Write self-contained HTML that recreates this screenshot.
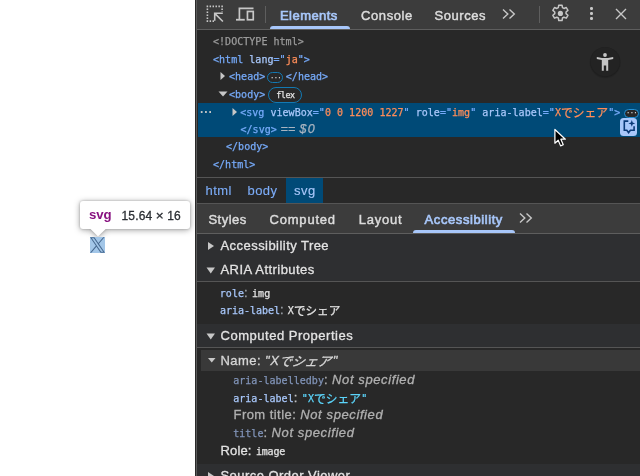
<!DOCTYPE html>
<html lang="ja">
<head>
<meta charset="utf-8">
<title>DevTools</title>
<style>
html,body{margin:0;padding:0;}
body{width:640px;height:476px;position:relative;overflow:hidden;background:#fff;
  font-family:"Liberation Sans","Noto Sans CJK JP",sans-serif;font-size:13px;color:#e3e3e3;}
.abs{position:absolute;}
.mono{font-family:"DejaVu Sans Mono","Liberation Mono","Noto Sans CJK JP",monospace;font-size:10px;letter-spacing:0.03px;-webkit-text-stroke:0.25px;}
.cjk{font-family:"Noto Sans CJK JP",sans-serif;font-size:11.8px;letter-spacing:0;line-height:0;position:relative;top:1.1px;}
#dt{left:196px;top:0;width:444px;height:476px;background:#282828;}
#lb{left:196px;top:0;width:1px;height:476px;background:#5a5a5a;}
.t{position:absolute;white-space:nowrap;line-height:1;}
.ui{font-size:13px;letter-spacing:0.45px;-webkit-text-stroke:0.3px;}
.tab{-webkit-text-stroke:0.45px;}
.crumb{-webkit-text-stroke:0.12px;}
.sel{color:#a8c7fa;-webkit-text-stroke:0.65px;letter-spacing:0.45px;}
.tag{color:#76aaf9;}
.an{color:#a8c7fa;}
.av{color:#fe8d59;}
.gr{color:#9aa0a6;}
.row{position:absolute;left:0;height:17.5px;line-height:17.5px;white-space:nowrap;}
</style>
</head>
<body>
<div id="wrap" style="position:absolute;left:0;top:0;width:640px;height:476px;will-change:transform;">
<div class="abs" id="dt"></div>
<div class="abs" id="lb"></div>
<div class="abs" style="left:195px;top:0;width:1px;height:476px;background:#2a2a2a;"></div>

<!-- top toolbar -->
<div class="abs" style="left:197px;top:0;width:443px;height:29px;background:#3c3c3c;"></div>
<div class="abs" style="left:197px;top:29px;width:443px;height:1px;background:#5e5e5e;"></div>
<!-- inspect icon -->
<svg class="abs" style="left:206px;top:5px" width="18" height="18" viewBox="0 0 18 18">
  <rect x="1.400" y="1.400" width="14.700" height="14.700" fill="none" stroke="#c7c7c7" stroke-width="1.600" stroke-dasharray="1.470 1.470" stroke-dashoffset="0.735"/>
  <rect x="8.400" y="8.500" width="10" height="10" fill="#3c3c3c"/>
  <rect x="9.900" y="6.900" width="8.100" height="3" fill="#3c3c3c"/>
  <path d="M8.700 15.800 V8.300 H16.800 M9 8.600 L16.900 16.500" fill="none" stroke="#c7c7c7" stroke-width="1.600"/>
</svg>
<!-- device icon -->
<svg class="abs" style="left:235px;top:6px" width="20" height="16" viewBox="0 0 20 16">
  <path d="M4.400 13 V2.300 H18.500" fill="none" stroke="#c7c7c7" stroke-width="1.700"/>
  <path d="M1 13.750 H9.750" fill="none" stroke="#c7c7c7" stroke-width="1.800"/>
  <rect x="12.450" y="5.450" width="5.800" height="8.300" fill="none" stroke="#c7c7c7" stroke-width="1.700"/>
</svg>
<div class="abs" style="left:265px;top:6px;width:1px;height:17px;background:#5e5e5e;"></div>
<div class="t ui sel" style="left:280px;top:8.5px;">Elements</div>
<div class="abs" style="left:270px;top:26px;width:80px;height:3px;background:#a8c7fa;border-radius:3px 3px 0 0;"></div>
<div class="t ui tab" style="left:361px;top:8.5px;color:#dcdcdc;letter-spacing:0.6px">Console</div>
<div class="t ui tab" style="left:434.5px;top:8.5px;color:#dcdcdc;letter-spacing:0.55px">Sources</div>
<svg class="abs" style="left:501px;top:8px" width="16" height="12" viewBox="0 0 16 12">
  <path d="M2 1.5 L6.8 6 L2 10.5 M8.5 1.5 L13.3 6 L8.5 10.5" fill="none" stroke="#c7c7c7" stroke-width="1.4"/>
</svg>
<div class="abs" style="left:539px;top:6px;width:1px;height:17px;background:#5e5e5e;"></div>
<!-- gear -->
<svg class="abs" style="left:549.5px;top:3.4px" width="20.8" height="20.8" viewBox="0 0 24 24">
  <path fill="none" stroke="#c7c7c7" stroke-width="1.700" stroke-linejoin="round" d="M10.1 2.5h3.8l.5 2.9 1.7.9 2.7-1.1 1.9 3.3-2.2 1.9v1.9l2.2 1.9-1.9 3.3-2.7-1.1-1.7.9-.5 2.9h-3.8l-.5-2.9-1.7-.9-2.7 1.1-1.9-3.3 2.2-1.9v-1.9l-2.2-1.900 1.9-3.3 2.7 1.100 1.700-.9z"/>
  <circle cx="12" cy="12" r="3" fill="#c7c7c7"/>
</svg>
<div class="abs" style="left:589.5px;top:7.3px;width:3px;height:3px;border-radius:1.2px;background:#c7c7c7"></div>
<div class="abs" style="left:589.5px;top:12.3px;width:3px;height:3px;border-radius:1.2px;background:#c7c7c7"></div>
<div class="abs" style="left:589.5px;top:17.3px;width:3px;height:3px;border-radius:1.2px;background:#c7c7c7"></div>
<svg class="abs" style="left:614px;top:7px" width="14" height="14" viewBox="0 0 14 14">
  <path d="M2 2 L12 12 M12 2 L2 12" fill="none" stroke="#c7c7c7" stroke-width="1.4"/>
</svg>

<!-- DOM tree -->
<div class="abs" style="left:198px;top:102.7px;width:442px;height:34.3px;background:#004a77;"></div>
<div class="row mono" style="left:213px;top:33.3px;color:#9b9b9b;">&lt;!DOCTYPE html&gt;</div>
<div class="row mono" style="left:213px;top:50.8px;"><span class="tag">&lt;html </span><span class="an">lang</span><span class="tag">="</span><span class="av">ja</span><span class="tag">"&gt;</span></div>
<div class="row mono" style="left:229px;top:68.3px;"><span class="tag">&lt;head&gt;</span><span style="display:inline-block;width:20.5px"></span><span class="tag">&lt;/head&gt;</span></div>
<div class="row mono" style="left:229px;top:85.8px;"><span class="tag">&lt;body&gt;</span></div>
<div class="row mono" style="left:240.200px;top:103.600px;"><span class="tag">&lt;svg </span><span class="an">viewBox</span><span class="tag">="</span><span class="av">0 0 1200 1227</span><span class="tag">" </span><span class="an">role</span><span class="tag">="</span><span class="av">img</span><span class="tag">" </span><span class="an">aria-label</span><span class="tag">="</span><span class="av">X<span class="cjk">でシェア</span></span><span class="tag">"&gt;</span></div>
<div class="row mono" style="left:240.5px;top:120.8px;"><span class="tag">&lt;/svg&gt;</span><span style="font-family:'Liberation Sans',sans-serif;color:#a9b4c0;font-style:italic;font-size:12.5px;letter-spacing:0.3px;position:absolute;left:40px;top:0">== <span style="letter-spacing:1.2px">$0</span></span></div>
<div class="row mono" style="left:226px;top:138.3px;"><span class="tag">&lt;/body&gt;</span></div>
<div class="row mono" style="left:213px;top:155.800px;"><span class="tag">&lt;/html&gt;</span></div>
<!-- tree arrows -->
<svg class="abs" style="left:218.5px;top:71px" width="8" height="10" viewBox="0 0 8 10"><path d="M1.5 1 L6 5 L1.5 9 Z" fill="#c7c7c7"/></svg>
<svg class="abs" style="left:217.500px;top:89.700px" width="10" height="8" viewBox="0 0 10 8"><path d="M0.5 1.5 H9.5 L5 6.5 Z" fill="#c7c7c7"/></svg>
<svg class="abs" style="left:231.400px;top:107px" width="8" height="10" viewBox="0 0 8 10"><path d="M1.5 1 L6 5 L1.5 9 Z" fill="#c7c7c7"/></svg>
<!-- head ellipsis pill -->
<div class="abs" style="left:267.2px;top:72px;width:14px;height:9px;border:1px solid #1279b3;border-radius:6px;"></div>
<div class="t" style="left:270.5px;top:72.5px;font-size:10px;color:#e3e3e3;letter-spacing:0.3px;">···</div>
<!-- flex pill -->
<div class="abs" style="left:268px;top:87px;width:32.3px;height:13.6px;border:1px solid #1279b3;border-radius:8px;"></div>
<div class="t mono" style="left:276.2px;top:90.5px;font-size:8.400px;color:#e3e3e3;letter-spacing:-0.4px">flex</div>
<!-- left ellipsis -->
<div class="t" style="left:200px;top:106px;font-size:12px;font-weight:bold;color:#c7c7c7;letter-spacing:0.3px;">···</div>
<!-- row end ellipsis pill -->
<div class="abs" style="left:623.600px;top:108.700px;width:13.100px;height:7.200px;border:1px solid #2390d6;border-radius:6px;background:#282828;"></div>
<div class="t" style="left:626.6px;top:108.3px;font-size:10px;color:#e3e3e3;letter-spacing:0.3px;">···</div>
<!-- AI button -->
<div class="abs" style="left:620px;top:118px;width:17px;height:17.5px;background:#a8c7fa;border-radius:3.5px;"></div>
<svg class="abs" style="left:620px;top:118px" width="17" height="18" viewBox="0 0 17 18">
  <path d="M8.300 3.100 H4.300 V12.300 H6.800 L8.600 14.600 L10.400 12.300 H14.100 V8.300" fill="none" stroke="#0a3a78" stroke-width="1.600"/>
  <path d="M11.800 2 L12.700 4.500 L15.200 5.400 L12.700 6.300 L11.800 8.800 L10.900 6.300 L8.400 5.400 L10.900 4.500 Z" fill="#0a3a78"/>
</svg>
<!-- floating a11y button -->
<svg class="abs" style="left:588px;top:44px" width="34" height="36" viewBox="0 0 34 36">
  <circle cx="17.2" cy="18.6" r="15.6" fill="#000" opacity="0.10"/>
  <circle cx="17.2" cy="18.200" r="15" fill="#000" opacity="0.12"/>
  <circle cx="17.2" cy="17.800" r="14.600" fill="#232323"/>
  <circle cx="17" cy="11" r="1.900" fill="#c6c6c6"/>
  <path d="M8.800 13.100 L14 14 H20 L25.200 13.100 V14.900 L20.200 16.100 V26.700 H18.200 V21.600 H15.800 V26.700 H13.800 V16.100 L8.800 14.900 Z" fill="#c6c6c6"/>
</svg>

<!-- breadcrumbs -->
<div class="abs" style="left:197px;top:177px;width:443px;height:1px;background:#555;"></div>
<div class="abs" style="left:286px;top:178px;width:37px;height:25px;background:#004a77;"></div>
<div class="t ui crumb" style="left:205.500px;top:184px;color:#7cacf8;">html</div>
<div class="t ui crumb" style="left:247.500px;top:184px;color:#7cacf8;">body</div>
<div class="t ui crumb" style="left:294px;top:184px;color:#a8c7fa;">svg</div>

<!-- side tabs -->
<div class="abs" style="left:197px;top:203px;width:443px;height:30px;background:#3c3c3c;"></div>
<div class="abs" style="left:197px;top:203px;width:443px;height:1px;background:#555;"></div>
<div class="abs" style="left:197px;top:233px;width:443px;height:1px;background:#5e5e5e;"></div>
<div class="t ui tab" style="left:208.500px;top:213px;color:#dcdcdc;">Styles</div>
<div class="t ui tab" style="left:269.500px;top:213px;color:#dcdcdc;letter-spacing:0.8px">Computed</div>
<div class="t ui tab" style="left:358.8px;top:213px;color:#dcdcdc;letter-spacing:0.75px">Layout</div>
<div class="t ui sel" style="left:424.600px;top:213px;letter-spacing:0.58px">Accessibility</div>
<div class="abs" style="left:413px;top:230px;width:102px;height:3px;background:#a8c7fa;border-radius:3px 3px 0 0;"></div>
<svg class="abs" style="left:518px;top:212px" width="16" height="12" viewBox="0 0 16 12">
  <path d="M2 1.500 L6.800 6 L2 10.500 M8.500 1.500 L13.300 6 L8.500 10.500" fill="none" stroke="#c7c7c7" stroke-width="1.400"/>
</svg>

<!-- section headers -->
<div class="abs" style="left:197px;top:234px;width:443px;height:47px;background:#2e2f31;"></div>
<div class="abs" style="left:197px;top:281px;width:443px;height:1px;background:#555;"></div>
<svg class="abs" style="left:207px;top:241px" width="8" height="10" viewBox="0 0 8 10"><path d="M1 1 L7 5 L1 9 Z" fill="#c7c7c7"/></svg>
<div class="t ui" style="left:220.500px;top:239px;color:#e3e3e3;">Accessibility Tree</div>
<svg class="abs" style="left:206px;top:265.700px" width="10" height="8" viewBox="0 0 10 8"><path d="M0.500 1.500 H9 L4.750 7.500 Z" fill="#c7c7c7"/></svg>
<div class="t ui" style="left:220.500px;top:263px;color:#e3e3e3;">ARIA Attributes</div>

<div class="row" style="left:219.800px;top:283.900px;"><span class="mono an">role</span><span class="ui gr" style="margin-right:-0.1px">: </span><span class="mono" style="color:#e3e3e3">img</span></div>
<div class="row" style="left:220.100px;top:301.200px;"><span class="mono an" style="letter-spacing:-0.03px">aria-label</span><span class="ui gr" style="margin-right:-0.300px">: </span><span class="mono" style="color:#e3e3e3">X<span class="cjk" style="font-size:11.600px">でシェア</span></span></div>

<div class="abs" style="left:197px;top:324px;width:443px;height:23px;background:#2e2f31;"></div>
<div class="abs" style="left:197px;top:347px;width:443px;height:1px;background:#555;"></div>
<svg class="abs" style="left:206px;top:331.500px" width="10" height="8" viewBox="0 0 10 8"><path d="M0.500 1.500 H9 L4.750 7.500 Z" fill="#c7c7c7"/></svg>
<div class="t ui" style="left:220.500px;top:329px;color:#e3e3e3;letter-spacing:0.52px">Computed Properties</div>

<div class="abs" style="left:201px;top:350px;width:439px;height:20.700px;background:#393939;"></div>
<svg class="abs" style="left:207px;top:357px" width="10" height="7" viewBox="0 0 10 7"><path d="M1 1 H8.500 L4.750 5.500 Z" fill="#c7c7c7"/></svg>
<div class="t ui" style="left:220.500px;top:353.700px;color:#d6d6d6;">Name: <span style="font-style:italic">"X<span style="font-family:'Noto Sans CJK JP',sans-serif;font-size:13px;letter-spacing:0;line-height:0;display:inline-block;position:relative;top:1px;margin-right:1.5px;transform:skewX(-12deg)">でシェア</span>"</span></div>

<div class="t" style="left:233.200px;top:373.300px;"><span class="mono" style="color:#8194b8">aria-labelledby</span><span class="ui" style="color:#b0b0b0">: <i style="letter-spacing:0.6px">Not specified</i></span></div>
<div class="t" style="left:233.200px;top:390.800px;"><span class="mono"><span class="an">aria-label</span></span><span class="ui" style="color:#c0c0c0">: </span><span class="mono"><span style="color:#5cd5fb">"X<span class="cjk">でシェア</span>"</span></span></div>
<div class="t ui" style="left:233.500px;top:407.600px;color:#b0b0b0;">From title: <i style="letter-spacing:0.6px">Not specified</i></div>
<div class="t" style="left:233.200px;top:425.800px;"><span class="mono" style="color:#8194b8">title</span><span class="ui" style="color:#b0b0b0">: <i style="letter-spacing:0.6px">Not specified</i></span></div>
<div class="t" style="left:220.500px;top:443.500px;"><span class="ui" style="color:#e3e3e3;letter-spacing:0.15px">Role: </span><span class="mono" style="color:#e3e3e3;letter-spacing:-0.15px;margin-left:0.5px">image</span></div>

<div class="abs" style="left:197px;top:463.500px;width:443px;height:13px;background:#2e2f31;"></div>
<svg class="abs" style="left:207px;top:471px" width="8" height="10" viewBox="0 0 8 10"><path d="M1 1 L7 5 L1 9 Z" fill="#c7c7c7"/></svg>
<div class="t ui" style="left:220.500px;top:469px;color:#e3e3e3;">Source Order Viewer</div>

<!-- page side: tooltip + highlight -->
<div class="abs" style="left:0;top:0;width:195px;height:476px;filter:drop-shadow(0 1.5px 3px rgba(0,0,0,.30)) drop-shadow(0 0 1px rgba(0,0,0,.25));">
<div class="abs" style="left:80px;top:201px;width:110px;height:28px;background:#fff;border-radius:3px;"></div>
<svg class="abs" style="left:88px;top:228.500px" width="20" height="10" viewBox="0 0 20 10"><path d="M2.500 0 H17.700 L10 7.600 Z" fill="#fff"/></svg>
</div>
<div class="t" style="left:89px;top:208px;font-size:13.200px;font-weight:bold;color:#881280;letter-spacing:-0.1px;">svg</div>
<div class="t" style="left:121.500px;top:210px;font-size:12px;color:#2a2e33;letter-spacing:0.15px;-webkit-text-stroke:0.3px;">15.64 <span style="font-size:13.500px;line-height:0">×</span> 16</div>
<div class="abs" style="left:90px;top:237px;width:15px;height:16px;background:#a2c6e8;"></div>
<svg class="abs" style="left:90px;top:237px" width="15" height="16" viewBox="0 0 1200 1227">
  <path fill="#46688f" d="M714.163 519.284L1160.890 0H1055.030L667.137 450.887L357.328 0H0L468.492 681.821L0 1226.370H105.866L515.491 750.218L842.672 1226.370H1200L714.137 519.284H714.163ZM569.165 687.828L521.697 619.934L144.011 79.694H306.615L611.412 515.685L658.880 583.579L1055.080 1150.300H892.476L569.165 687.854V687.828Z"/>
</svg>

<!-- cursor -->
<svg class="abs" style="left:553.200px;top:127.800px" width="15.200" height="20" viewBox="0 0 16 21">
  <path d="M2 1.500 V16 L5.500 12.800 L8 18.800 L10.800 17.600 L8.300 11.800 H13 Z" fill="#000" stroke="#fff" stroke-width="1.300" stroke-linejoin="round"/>
</svg>
</div>
</body>
</html>
